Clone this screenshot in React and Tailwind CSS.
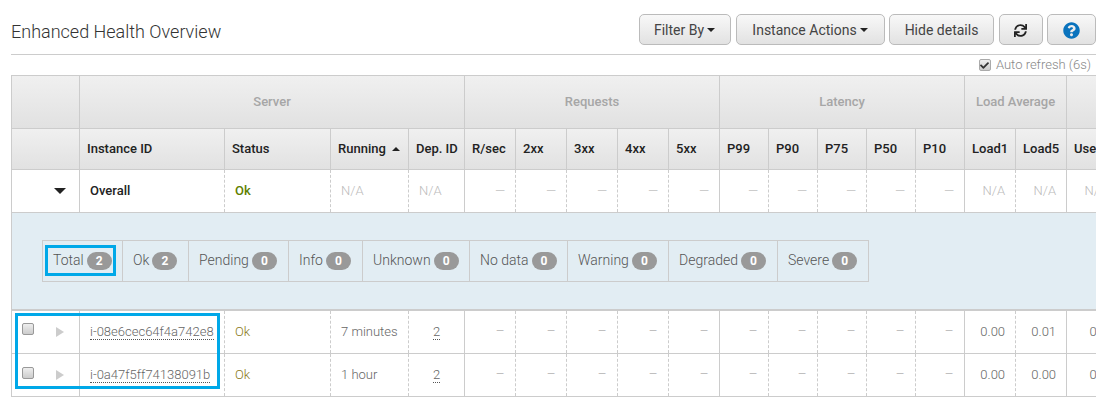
import React from "react";
import { FaCheck, FaQuestionCircle, FaSync } from "react-icons/fa";

const groups = [
  { label: "", span: 1 },
  { label: "Server", span: 4 },
  { label: "Requests", span: 5 },
  { label: "Latency", span: 5 },
  { label: "Load Average", span: 2 },
  { label: "CPU Utilization", span: 3 },
];

const colWidths = [68, 145, 106, 78, 56, 51, 51, 51, 51, 51, 49, 49, 49, 49, 49, 51, 51, 51, 51, 51];

const metricCols = ["R/sec", "2xx", "3xx", "4xx", "5xx", "P99", "P90", "P75", "P50", "P10"];
// last column of a group keeps a solid right border in the body
const groupEnds = ["5xx", "P10"];

const solidCell = "border-y border-r border-[#ccc]";
const dashedCell = "border-y border-r border-[#ccc] [border-right-style:dashed]";

const stats = [
  ["Total", 2, "w-[79px]"],
  ["Ok", 2, "w-[66px]"],
  ["Pending", 0, "w-[100px]"],
  ["Info", 0, "w-[74px]"],
  ["Unknown", 0, "w-[107px]"],
  ["No data", 0, "w-[98px]"],
  ["Warning", 0, "w-[101px]"],
  ["Degraded", 0, "w-[109px]"],
  ["Severe", 0, "w-[91px]"],
];

const rows = [
  { id: "i-08e6cec64f4a742e8", running: "7 minutes", load1: "0.00", load5: "0.01", h: "h-[44px]" },
  { id: "i-0a47f5ff74138091b", running: "1 hour", load1: "0.00", load5: "0.00", h: "h-[43px]" },
];

const btn = "h-[31px] pt-[1px] border border-[#bbb] rounded-[5px] bg-linear-to-b from-[#f8f8f8] to-[#e2e2e2]";

const CaretDown = () => (
  <span className="inline-block w-0 h-0 border-x-4 border-t-4 border-x-transparent border-t-[#222]" />
);

const HeadCell = ({ children }) => (
  <th className="pl-[7px] text-left font-medium text-[13px] text-[#222] border border-[#ccc]">{children}</th>
);

const App = () => {
  return (
    <div className="w-[1101px] h-[410px] overflow-hidden bg-white pl-[11px] pr-[5px] [font-family:Roboto,sans-serif]">
      <div className="flex items-center justify-between h-[55px] pt-[14px] pb-[9px] border-b border-[#ccc]">
        <h1 className="pt-[5px] text-[18px] font-light text-[#333] leading-none">Enhanced Health Overview</h1>
        <div className="flex gap-[4.5px] text-[14px] text-[#444]">
          <button className={`flex items-center justify-center gap-[3px] w-[92px] pr-[1px] ${btn}`}>
            Filter By <CaretDown />
          </button>
          <button className={`flex items-center justify-center gap-[3px] w-[149px] ${btn}`}>
            Instance Actions <CaretDown />
          </button>
          <button className={`w-[105px] ${btn}`}>Hide details</button>
          <button className={`flex items-center justify-center w-[44px] ${btn}`}>
            <FaSync className="text-[13px] text-[#222]" />
          </button>
          <button className={`flex items-center justify-center w-[49px] ${btn}`}>
            <FaQuestionCircle className="text-[17px] text-[#0a73bd]" />
          </button>
        </div>
      </div>

      <div className="flex items-center justify-end gap-[5px] h-[20px] pr-[5px] text-[13px] font-light text-[#888]">
        <span className="relative w-[12px] h-[12px] rounded-[2px] border border-[#aaa] bg-linear-to-b from-[#eee] to-[#ccc]">
          <FaCheck className="absolute left-[0.5px] top-[0.5px] text-[9px] text-[#333]" />
        </span>
        Auto refresh (6s)
      </div>

      <div className="relative w-[1085px] overflow-hidden">
        <table className="table-fixed w-[1157px]">
          <colgroup>
            {colWidths.map((w, i) => (
              <col key={i} style={{ width: w }} />
            ))}
          </colgroup>
          <thead>
            <tr className="h-[53px] bg-linear-to-b from-[#f0f0f0] to-[#e1e1e1]">
              {groups.map((g, i) => (
                <th
                  key={i}
                  colSpan={g.span}
                  className="text-center font-medium text-[13px] text-[#a6a6a6] border border-[#ccc]"
                >
                  {g.label}
                </th>
              ))}
            </tr>
            <tr className="h-[41px] bg-linear-to-b from-[#f0f0f0] to-[#e1e1e1]">
              <HeadCell />
              <HeadCell>Instance ID</HeadCell>
              <HeadCell>Status</HeadCell>
              <HeadCell>
                <span className="flex items-center gap-[6px]">
                  Running
                  <span className="w-0 h-0 border-x-4 border-b-4 border-x-transparent border-b-[#222]" />
                </span>
              </HeadCell>
              <HeadCell>Dep. ID</HeadCell>
              {metricCols.map((c) => (
                <HeadCell key={c}>{c}</HeadCell>
              ))}
              <HeadCell>Load1</HeadCell>
              <HeadCell>Load5</HeadCell>
              <HeadCell>User%</HeadCell>
              <HeadCell>Nice%</HeadCell>
              <HeadCell>System%</HeadCell>
            </tr>
          </thead>
          <tbody className="text-[13px]">
            <tr className="h-[43px]">
              <td className={`border-l ${solidCell} pl-[42px]`}>
                <span className="block w-0 h-0 border-x-[6px] border-t-[6px] border-x-transparent border-t-[#222]" />
              </td>
              <td className={`${dashedCell} pl-[10px] font-medium text-[#222]`}>Overall</td>
              <td className={`${dashedCell} pl-[10px] font-medium text-[#5f8000]`}>Ok</td>
              <td className={`${dashedCell} pl-[10px] font-light text-[#bbb]`}>N/A</td>
              <td className={`${solidCell} pl-[10px] font-light text-[#bbb]`}>N/A</td>
              {metricCols.map((c) => (
                <td
                  key={c}
                  className={`${groupEnds.includes(c) ? solidCell : dashedCell} pr-[10px] text-right font-normal text-[#ccc]`}
                >
                  —
                </td>
              ))}
              <td className={`${dashedCell} pr-[10px] text-right font-light text-[#bbb]`}>N/A</td>
              <td className={`${solidCell} pr-[10px] text-right font-light text-[#bbb]`}>N/A</td>
              <td className={`${dashedCell} pr-[10px] text-right font-light text-[#bbb]`}>N/A</td>
              <td className={`${dashedCell} pr-[10px] text-right font-light text-[#bbb]`}>N/A</td>
              <td className={`${solidCell} pr-[10px] text-right font-light text-[#bbb]`}>N/A</td>
            </tr>
            <tr className="h-[97px]">
              <td colSpan={20} className="border-x border-t border-b-2 border-[#ccc] bg-[#e2edf3] pl-[30px]">
                <div className="flex w-fit h-[42px] border border-[#ccc] font-light text-[14px] text-[#555]">
                  {stats.map(([name, count, width], i) => (
                    <div
                      key={name}
                      className={`flex items-center gap-[3px] pl-[10px] ${width} ${i > 0 ? "border-l border-[#ccc]" : ""}`}
                    >
                      {name}
                      <span className="flex items-center justify-center w-[25px] h-[18px] mt-[1px] rounded-[9px] bg-[#999] text-[12px] font-bold text-white">
                        {count}
                      </span>
                    </div>
                  ))}
                </div>
              </td>
            </tr>
            {rows.map((row) => (
              <tr key={row.id} className={`${row.h} font-light text-[#666]`}>
                <td className={`border-l ${solidCell} pl-[10px]`}>
                  <div className="flex items-center gap-[22px]">
                    <input
                      type="checkbox"
                      className="appearance-none -mt-[5px] w-[12px] h-[12px] rounded-[2px] border border-[#999] bg-linear-to-b from-[#eee] to-[#ccc]"
                    />
                    <span className="w-0 h-0 border-y-[5px] border-l-[8px] border-y-transparent border-l-[#ccc]" />
                  </div>
                </td>
                <td className={`${dashedCell} pl-[10px]`}>
                  <span className="border-b border-dotted border-[#555]">{row.id}</span>
                </td>
                <td className={`${dashedCell} pl-[10px] text-[#8a7a20]`}>Ok</td>
                <td className={`${dashedCell} pl-[10px]`}>{row.running}</td>
                <td className={`${solidCell} text-center`}>
                  <span className="border-b border-dotted border-[#555]">2</span>
                </td>
                {metricCols.map((c) => (
                  <td
                    key={c}
                    className={`${groupEnds.includes(c) ? solidCell : dashedCell} pr-[11px] text-right text-[10.5px] text-[#999]`}
                  >
                    —
                  </td>
                ))}
                <td className={`${dashedCell} pr-[10px] text-right`}>{row.load1}</td>
                <td className={`${solidCell} pr-[10px] text-right`}>{row.load5}</td>
                <td className={`${dashedCell} pr-[10px] text-right`}>0.0</td>
                <td className={`${dashedCell} pr-[10px] text-right`}>0.0</td>
                <td className={`${solidCell} pr-[10px] text-right`}>0.0</td>
              </tr>
            ))}
          </tbody>
        </table>
        {/* annotation boxes drawn over the table */}
        <div className="absolute left-[34px] top-[170px] w-[71px] h-[31px] border-[3px] border-[#00a8e8]" />
        <div className="absolute left-[4px] top-[238px] w-[205px] h-[76px] border-[3px] border-[#00a8e8]" />
      </div>
    </div>
  );
};

export default App;
